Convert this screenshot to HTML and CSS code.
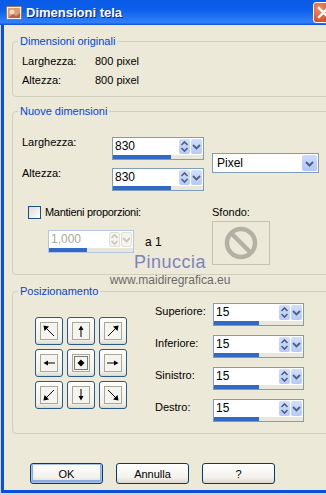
FILE: index.html
```html
<!DOCTYPE html>
<html lang="it">
<head>
    <meta charset="UTF-8">
    <meta name="viewport" content="width=device-width, initial-scale=1.0">
    <title>Dimensioni tela</title>
    <link rel="stylesheet" href="styles.css">
</head>
<body>
    <div class="window">
        <div class="titlebar">
            <svg class="app-icon" width="16" height="16" viewBox="0 0 16 16">
                <rect x="0.5" y="1.5" width="15" height="13" rx="1" fill="#f3efe6" stroke="#8a7a6a"/>
                <rect x="2" y="3" width="12" height="10" fill="#d9a078"/>
                <circle cx="6" cy="7" r="2.5" fill="#f5d9c0"/>
                <path d="M2 13 L7 9 L10 11 L14 8 L14 13 Z" fill="#b8624a"/>
            </svg>
            <span class="title">Dimensioni tela</span>
            <span class="close-btn">
                <svg width="13" height="13" viewBox="0 0 13 13"><path d="M2 2 L11 11 M11 2 L2 11" stroke="#fff" stroke-width="2.4" stroke-linecap="square"/></svg>
            </span>
        </div>

        <div class="content">
            <fieldset class="group group-orig">
                <legend>Dimensioni originali</legend>
                <div class="info-grid">
                    <span>Larghezza:</span><span>800 pixel</span>
                    <span>Altezza:</span><span>800 pixel</span>
                </div>
            </fieldset>

            <fieldset class="group group-new">
                <legend>Nuove dimensioni</legend>
                <div class="dims-top">
                    <div class="field-grid">
                        <label class="field-label">Larghezza:</label>
                        <div class="spin spin-wide">
                            <div class="spin-top">
                                <span class="spin-val">830</span>
                                <span class="spin-btn"><svg width="9" height="13" viewBox="0 0 9 13"><path d="M1.5 5 L4.5 2 L7.5 5 M1.5 8 L4.5 11 L7.5 8" fill="none" stroke="#4d6185" stroke-width="1.6"/></svg></span>
                                <span class="spin-btn"><svg width="9" height="13" viewBox="0 0 9 13"><path d="M1 5 L4.5 8.5 L8 5" fill="none" stroke="#4d6185" stroke-width="1.8"/></svg></span>
                            </div>
                            <div class="spin-bar"><span style="width: 64%"></span></div>
                        </div>
                        <label class="field-label">Altezza:</label>
                        <div class="spin spin-wide">
                            <div class="spin-top">
                                <span class="spin-val">830</span>
                                <span class="spin-btn"><svg width="9" height="13" viewBox="0 0 9 13"><path d="M1.5 5 L4.5 2 L7.5 5 M1.5 8 L4.5 11 L7.5 8" fill="none" stroke="#4d6185" stroke-width="1.6"/></svg></span>
                                <span class="spin-btn"><svg width="9" height="13" viewBox="0 0 9 13"><path d="M1 5 L4.5 8.5 L8 5" fill="none" stroke="#4d6185" stroke-width="1.8"/></svg></span>
                            </div>
                            <div class="spin-bar"><span style="width: 64%"></span></div>
                        </div>
                    </div>
                    <div class="select">
                        <span class="select-val">Pixel</span>
                        <span class="select-btn"><svg width="11" height="11" viewBox="0 0 11 11"><path d="M2 4 L5.5 7.5 L9 4" fill="none" stroke="#4d6185" stroke-width="2"/></svg></span>
                    </div>
                </div>

                <div class="dims-bottom">
                    <div class="ratio-col">
                        <label class="check"><span class="checkbox"></span>Mantieni proporzioni:</label>
                        <div class="ratio-row">
                            <div class="spin spin-ratio disabled">
                                <div class="spin-top">
                                    <span class="spin-val">1,000</span>
                                    <span class="spin-btn"><svg width="9" height="13" viewBox="0 0 9 13"><path d="M1.5 5 L4.5 2 L7.5 5 M1.5 8 L4.5 11 L7.5 8" fill="none" stroke="#c9c7ba" stroke-width="1.6"/></svg></span>
                                    <span class="spin-btn"><svg width="9" height="13" viewBox="0 0 9 13"><path d="M1 5 L4.5 8.5 L8 5" fill="none" stroke="#c9c7ba" stroke-width="1.8"/></svg></span>
                                </div>
                                <div class="spin-bar"><span style="width: 45%"></span></div>
                            </div>
                            <span class="ratio-to">a 1</span>
                        </div>
                    </div>
                    <div class="bg-col">
                        <span>Sfondo:</span>
                        <div class="bg-swatch">
                            <svg width="36" height="36" viewBox="0 0 36 36">
                                <circle cx="18" cy="18" r="14" fill="none" stroke="#b3b0a4" stroke-width="4.5"/>
                                <path d="M8.5 8.5 L27.5 27.5" stroke="#b3b0a4" stroke-width="4.5"/>
                            </svg>
                        </div>
                    </div>
                </div>
            </fieldset>

            <fieldset class="group group-pos">
                <legend>Posizionamento</legend>
                <div class="pos-body">
                    <div class="anchor-grid">
                        <span class="anchor"><svg width="18" height="18" viewBox="0 0 18 18"><rect x="0.5" y="0.5" width="17" height="17" fill="#f5f4ef" stroke="#a9a89f"/><path d="M14 14 L5 5" stroke="#000"/><path d="M3.5 3.5 L9 4.5 L4.5 9 Z" fill="#000"/></svg></span>
                        <span class="anchor"><svg width="18" height="18" viewBox="0 0 18 18"><rect x="0.5" y="0.5" width="17" height="17" fill="#f5f4ef" stroke="#a9a89f"/><path d="M9 15 L9 6" stroke="#000"/><path d="M9 3.5 L11.5 8 L6.5 8 Z" fill="#000"/></svg></span>
                        <span class="anchor"><svg width="18" height="18" viewBox="0 0 18 18"><rect x="0.5" y="0.5" width="17" height="17" fill="#f5f4ef" stroke="#a9a89f"/><path d="M4 14 L13 5" stroke="#000"/><path d="M14.5 3.5 L13.5 9 L9 4.5 Z" fill="#000"/></svg></span>
                        <span class="anchor"><svg width="18" height="18" viewBox="0 0 18 18"><rect x="0.5" y="0.5" width="17" height="17" fill="#f5f4ef" stroke="#a9a89f"/><path d="M15 9 L6 9" stroke="#000"/><path d="M3.5 9 L8 6.5 L8 11.5 Z" fill="#000"/></svg></span>
                        <span class="anchor focused"><svg width="18" height="18" viewBox="0 0 18 18"><rect x="0.5" y="0.5" width="17" height="17" fill="#f5f4ef" stroke="#a9a89f"/><rect x="2.5" y="2.5" width="13" height="13" fill="none" stroke="#000" stroke-dasharray="1 1"/><path d="M9 5.5 L12.5 9 L9 12.5 L5.5 9 Z" fill="#000"/></svg></span>
                        <span class="anchor"><svg width="18" height="18" viewBox="0 0 18 18"><rect x="0.5" y="0.5" width="17" height="17" fill="#f5f4ef" stroke="#a9a89f"/><path d="M3 9 L12 9" stroke="#000"/><path d="M14.5 9 L10 6.5 L10 11.5 Z" fill="#000"/></svg></span>
                        <span class="anchor"><svg width="18" height="18" viewBox="0 0 18 18"><rect x="0.5" y="0.5" width="17" height="17" fill="#f5f4ef" stroke="#a9a89f"/><path d="M14 4 L5 13" stroke="#000"/><path d="M3.5 14.5 L4.5 9 L9 13.5 Z" fill="#000"/></svg></span>
                        <span class="anchor"><svg width="18" height="18" viewBox="0 0 18 18"><rect x="0.5" y="0.5" width="17" height="17" fill="#f5f4ef" stroke="#a9a89f"/><path d="M9 3 L9 12" stroke="#000"/><path d="M9 14.5 L11.5 10 L6.5 10 Z" fill="#000"/></svg></span>
                        <span class="anchor"><svg width="18" height="18" viewBox="0 0 18 18"><rect x="0.5" y="0.5" width="17" height="17" fill="#f5f4ef" stroke="#a9a89f"/><path d="M4 4 L13 13" stroke="#000"/><path d="M14.5 14.5 L9 13.5 L13.5 9 Z" fill="#000"/></svg></span>
                    </div>

                    <div class="margin-grid">
                        <label class="margin-label">Superiore:</label>
                        <div class="spin spin-margin">
                            <div class="spin-top">
                                <span class="spin-val">15</span>
                                <span class="spin-btn"><svg width="9" height="13" viewBox="0 0 9 13"><path d="M1.5 5 L4.5 2 L7.5 5 M1.5 8 L4.5 11 L7.5 8" fill="none" stroke="#4d6185" stroke-width="1.6"/></svg></span>
                                <span class="spin-btn"><svg width="9" height="13" viewBox="0 0 9 13"><path d="M1 5 L4.5 8.5 L8 5" fill="none" stroke="#4d6185" stroke-width="1.8"/></svg></span>
                            </div>
                            <div class="spin-bar"><span style="width: 51%"></span></div>
                        </div>
                        <label class="margin-label">Inferiore:</label>
                        <div class="spin spin-margin">
                            <div class="spin-top">
                                <span class="spin-val">15</span>
                                <span class="spin-btn"><svg width="9" height="13" viewBox="0 0 9 13"><path d="M1.5 5 L4.5 2 L7.5 5 M1.5 8 L4.5 11 L7.5 8" fill="none" stroke="#4d6185" stroke-width="1.6"/></svg></span>
                                <span class="spin-btn"><svg width="9" height="13" viewBox="0 0 9 13"><path d="M1 5 L4.5 8.5 L8 5" fill="none" stroke="#4d6185" stroke-width="1.8"/></svg></span>
                            </div>
                            <div class="spin-bar"><span style="width: 51%"></span></div>
                        </div>
                        <label class="margin-label">Sinistro:</label>
                        <div class="spin spin-margin">
                            <div class="spin-top">
                                <span class="spin-val">15</span>
                                <span class="spin-btn"><svg width="9" height="13" viewBox="0 0 9 13"><path d="M1.5 5 L4.5 2 L7.5 5 M1.5 8 L4.5 11 L7.5 8" fill="none" stroke="#4d6185" stroke-width="1.6"/></svg></span>
                                <span class="spin-btn"><svg width="9" height="13" viewBox="0 0 9 13"><path d="M1 5 L4.5 8.5 L8 5" fill="none" stroke="#4d6185" stroke-width="1.8"/></svg></span>
                            </div>
                            <div class="spin-bar"><span style="width: 51%"></span></div>
                        </div>
                        <label class="margin-label">Destro:</label>
                        <div class="spin spin-margin">
                            <div class="spin-top">
                                <span class="spin-val">15</span>
                                <span class="spin-btn"><svg width="9" height="13" viewBox="0 0 9 13"><path d="M1.5 5 L4.5 2 L7.5 5 M1.5 8 L4.5 11 L7.5 8" fill="none" stroke="#4d6185" stroke-width="1.6"/></svg></span>
                                <span class="spin-btn"><svg width="9" height="13" viewBox="0 0 9 13"><path d="M1 5 L4.5 8.5 L8 5" fill="none" stroke="#4d6185" stroke-width="1.8"/></svg></span>
                            </div>
                            <div class="spin-bar"><span style="width: 51%"></span></div>
                        </div>
                    </div>
                </div>
            </fieldset>

            <div class="actions">
                <button class="btn btn-default">OK</button>
                <button class="btn">Annulla</button>
                <button class="btn">?</button>
            </div>

            <div class="watermark">
                <div class="wm-name">Pinuccia</div>
                <div class="wm-url">www.maidiregrafica.eu</div>
            </div>
        </div>
    </div>
</body>
</html>
```

FILE: styles.css
```css
* {
    margin: 0;
    padding: 0;
    box-sizing: border-box;
}

html,
body {
    overflow: hidden;
}

body {
    width: 326px;
    background: #d8d6cc;
    padding-left: 1px;
    font-family: 'Liberation Sans', Arial, sans-serif;
    font-size: 11px;
    color: #000;
}

.window {
    width: 400px;
    border-left: 3px solid #0a4fdc;
    border-bottom: 3px solid #0a4fdc;
    background: #ece9d8;
}

/* title bar */
.titlebar {
    height: 25px;
    display: flex;
    align-items: center;
    margin-left: -4px;
    padding-left: 6px;
    background: linear-gradient(#0a5ae6 0%, #0b5fea 40%, #2a7af6 80%, #2f7ff8 90%, #0c4fd4 100%);
}

.app-icon {
    flex-shrink: 0;
}

.title {
    margin-left: 4px;
    color: #fff;
    font-size: 13px;
    font-weight: bold;
    text-shadow: 1px 1px 0 #0a1f8a;
}

.close-btn {
    width: 21px;
    height: 21px;
    margin-left: auto;
    margin-right: 67px;
    display: flex;
    align-items: center;
    justify-content: center;
    border: 1px solid #fff;
    border-radius: 3px;
    background: radial-gradient(circle at 30% 30%, #f08a6a, #e0562f 60%, #c53a18);
}

/* content */
.content {
    position: relative;
    padding-top: 10px;
    padding-bottom: 6px;
}

.group {
    margin: 0 8px;
    border: 1px solid #d0d0bf;
    border-radius: 4px;
    padding: 0;
    min-width: 0;
}

.group legend {
    margin-left: 5px;
    padding: 0 2px;
    line-height: 13px;
    color: #0046d5;
}

.group-new {
    margin-top: 8px;
    padding-bottom: 9px;
}

.group-pos {
    margin-top: 10px;
    padding-bottom: 11px;
}

.info-grid {
    display: grid;
    grid-template-columns: 73px auto;
    line-height: 19px;
    padding: 4px 0 6px 9px;
}

/* new dimensions */
.dims-top {
    display: flex;
    padding: 19px 0 0 9px;
}

.field-grid {
    display: grid;
    grid-template-columns: 90px 92px;
    row-gap: 8px;
}

.field-label {
    align-self: start;
    line-height: 13px;
    margin-top: -1px;
}

.spin {
    height: 23px;
    border: 1px solid #7f9db9;
    background: #fff;
    display: flex;
    flex-direction: column;
}

.spin-wide {
    width: 92px;
}

.spin-margin {
    width: 91px;
}

.spin-ratio {
    width: 86px;
}

.spin-top {
    height: 17px;
    display: flex;
    padding-top: 1px;
}

.spin-val {
    flex: 1;
    padding-left: 2px;
    font-size: 12px;
    line-height: 15px;
}

.spin-btn {
    width: 11px;
    height: 15px;
    margin-right: 1px;
    display: flex;
    align-items: center;
    justify-content: center;
    border-radius: 2px;
    background: linear-gradient(#d2defc, #b6caf7);
}

.spin-bar {
    height: 4px;
    background: #e9e7dc;
}

.spin-bar span {
    display: block;
    height: 100%;
    background: #316ac5;
}

.spin.disabled {
    border-color: #b5c6e0;
}

.spin.disabled .spin-val {
    color: #aca899;
}

.spin.disabled .spin-btn {
    background: #f5f4ef;
    border: 1px solid #e3e1d6;
}

.select {
    width: 107px;
    height: 20px;
    margin: 16px 0 0 8px;
    border: 1px solid #7f9db9;
    background: #fff;
    display: flex;
    align-items: center;
}

.select-val {
    flex: 1;
    padding-left: 4px;
    font-size: 12px;
}

.select-btn {
    width: 15px;
    height: 16px;
    margin-right: 1px;
    display: flex;
    align-items: center;
    justify-content: center;
    border-radius: 2px;
    background: linear-gradient(#cfdcfd, #b1c6f8);
}

.dims-bottom {
    display: flex;
    margin-top: 15px;
}

.ratio-col {
    width: 199px;
    padding-left: 15px;
}

.check {
    display: flex;
    align-items: center;
    gap: 4px;
    line-height: 13px;
    letter-spacing: -0.3px;
}

.checkbox {
    width: 13px;
    height: 13px;
    border: 1px solid #1c5180;
    background: linear-gradient(135deg, #dcdcd7, #fff);
}

.ratio-row {
    display: flex;
    align-items: center;
    gap: 11px;
    margin: 11px 0 0 20px;
}

.ratio-to {
    font-size: 12px;
}

.bg-col {
    line-height: 13px;
}

.bg-swatch {
    width: 58px;
    height: 44px;
    margin-top: 2px;
    border: 1px solid #c5c2b4;
    display: flex;
    align-items: center;
    justify-content: center;
}

/* positioning */
.pos-body {
    display: flex;
    align-items: flex-start;
}

.anchor-grid {
    display: grid;
    grid-template-columns: repeat(3, 28px);
    gap: 4px;
    margin: 19px 0 0 22px;
}

.anchor {
    width: 28px;
    height: 28px;
    display: flex;
    align-items: center;
    justify-content: center;
    border: 1px solid #2a5a8c;
    border-radius: 3px;
    background: linear-gradient(#fdfdfb, #f1efe6 85%, #dcd7c9);
}

.margin-grid {
    display: grid;
    grid-template-columns: 58px 91px;
    row-gap: 9px;
    margin: 5px 0 0 28px;
}

.margin-label {
    align-self: start;
    line-height: 13px;
    margin-top: 2px;
}

/* bottom buttons */
.actions {
    display: flex;
    gap: 13px;
    margin-top: 29px;
    padding-left: 26px;
}

.btn {
    width: 73px;
    height: 21px;
    border: 1px solid #003c74;
    border-radius: 3px;
    background: linear-gradient(#ffffff, #f3f2ec 70%, #dcd8cc);
    font-family: 'Liberation Sans', Arial, sans-serif;
    font-size: 11px;
    color: #000;
}

.btn-default {
    box-shadow: inset 0 0 0 1px #aac4f0, inset 0 -1px 0 2px #8cacdf;
}

/* watermark overlay */
.watermark {
    position: absolute;
    left: 104px;
    top: 226px;
    width: 124px;
    text-align: center;
    pointer-events: none;
}

.wm-name {
    font-size: 18px;
    line-height: 22px;
    letter-spacing: 0.5px;
    color: #8084ad;
    text-shadow: 1px 1px 0 #e8e8f4;
}

.wm-url {
    font-size: 12px;
    line-height: 14px;
    color: #6a6a6a;
}
```
